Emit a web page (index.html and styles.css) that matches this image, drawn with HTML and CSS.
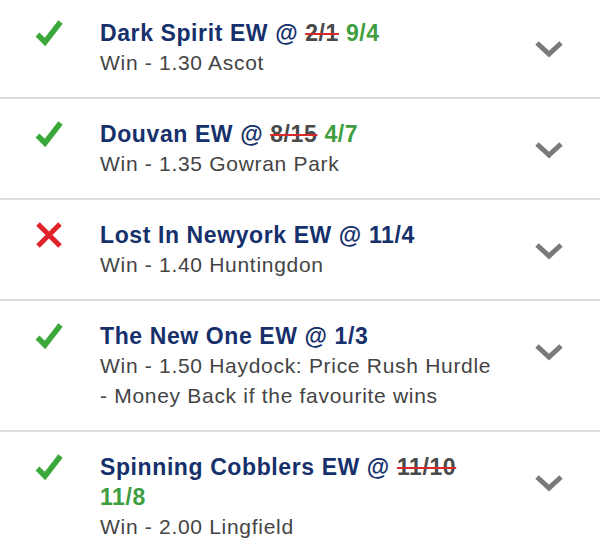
FILE: index.html
```html
<!DOCTYPE html>
<html>
<head>
<meta charset="utf-8">
<link rel="stylesheet" href="styles.css">
</head>
<body>
<div class="list">
  <div class="row">
    <svg class="icon" width="28" height="28" viewBox="0 0 28 28"><path d="M2.5 15.5 L10 23 L25.5 3" fill="none" stroke="#3aa83a" stroke-width="5.5"/></svg>
    <div class="text">
      <div class="title">Dark Spirit EW @ <span class="old">2/1</span> <span class="new">9/4</span></div>
      <div class="sub">Win - 1.30 Ascot</div>
    </div>
    <svg class="chev" width="30" height="18" viewBox="0 0 30 18"><path d="M3 3 L15 14 L27 3" fill="none" stroke="#7a7a7a" stroke-width="5"/></svg>
  </div>
  <div class="row">
    <svg class="icon" width="28" height="28" viewBox="0 0 28 28"><path d="M2.5 15.5 L10 23 L25.5 3" fill="none" stroke="#3aa83a" stroke-width="5.5"/></svg>
    <div class="text">
      <div class="title">Douvan EW @ <span class="old">8/15</span> <span class="new">4/7</span></div>
      <div class="sub">Win - 1.35 Gowran Park</div>
    </div>
    <svg class="chev" width="30" height="18" viewBox="0 0 30 18"><path d="M3 3 L15 14 L27 3" fill="none" stroke="#7a7a7a" stroke-width="5"/></svg>
  </div>
  <div class="row">
    <svg class="icon" width="28" height="28" viewBox="0 0 28 28"><path d="M3 3 L25 25 M25 3 L3 25" fill="none" stroke="#e0232b" stroke-width="5"/></svg>
    <div class="text">
      <div class="title">Lost In Newyork EW @ 11/4</div>
      <div class="sub">Win - 1.40 Huntingdon</div>
    </div>
    <svg class="chev" width="30" height="18" viewBox="0 0 30 18"><path d="M3 3 L15 14 L27 3" fill="none" stroke="#7a7a7a" stroke-width="5"/></svg>
  </div>
  <div class="row">
    <svg class="icon" width="28" height="28" viewBox="0 0 28 28"><path d="M2.5 15.5 L10 23 L25.5 3" fill="none" stroke="#3aa83a" stroke-width="5.5"/></svg>
    <div class="text">
      <div class="title">The New One EW @ 1/3</div>
      <div class="sub">Win - 1.50 Haydock: Price Rush Hurdle - Money Back if the favourite wins</div>
    </div>
    <svg class="chev" width="30" height="18" viewBox="0 0 30 18"><path d="M3 3 L15 14 L27 3" fill="none" stroke="#7a7a7a" stroke-width="5"/></svg>
  </div>
  <div class="row">
    <svg class="icon" width="28" height="28" viewBox="0 0 28 28"><path d="M2.5 15.5 L10 23 L25.5 3" fill="none" stroke="#3aa83a" stroke-width="5.5"/></svg>
    <div class="text">
      <div class="title">Spinning Cobblers EW @ <span class="old">11/10</span> <span class="new">11/8</span></div>
      <div class="sub">Win - 2.00 Lingfield</div>
    </div>
    <svg class="chev" width="30" height="18" viewBox="0 0 30 18"><path d="M3 3 L15 14 L27 3" fill="none" stroke="#7a7a7a" stroke-width="5"/></svg>
  </div>
</div>
</body>
</html>
```
FILE: styles.css
```css
html, body {
  margin: 0;
  padding: 0;
  background: #ffffff;
}
body {
  font-family: "Liberation Sans", Arial, sans-serif;
  overflow: hidden;
}
.list {
  margin-top: -2px;
}
.row {
  display: flex;
  align-items: flex-start;
  padding: 20px 0 19px;
  border-bottom: 2px solid #dcdcdc;
}
.icon {
  flex: none;
  margin-left: 35px;
  margin-top: 1px;
}
.text {
  flex: none;
  width: 402px;
  margin-left: 37px;
}
.title {
  font-size: 23px;
  font-weight: bold;
  line-height: 30px;
  letter-spacing: 0.6px;
  color: #16306b;
}
.old {
  color: #4a4a4a;
  text-decoration: line-through;
  text-decoration-color: #d52a2a;
  text-decoration-thickness: 2px;
}
.new {
  color: #3f9e3f;
}
.sub {
  font-size: 21px;
  line-height: 30px;
  letter-spacing: 0.7px;
  color: #444444;
}
.chev {
  flex: none;
  margin-left: auto;
  margin-right: 36px;
  margin-top: 22px;
}
```
